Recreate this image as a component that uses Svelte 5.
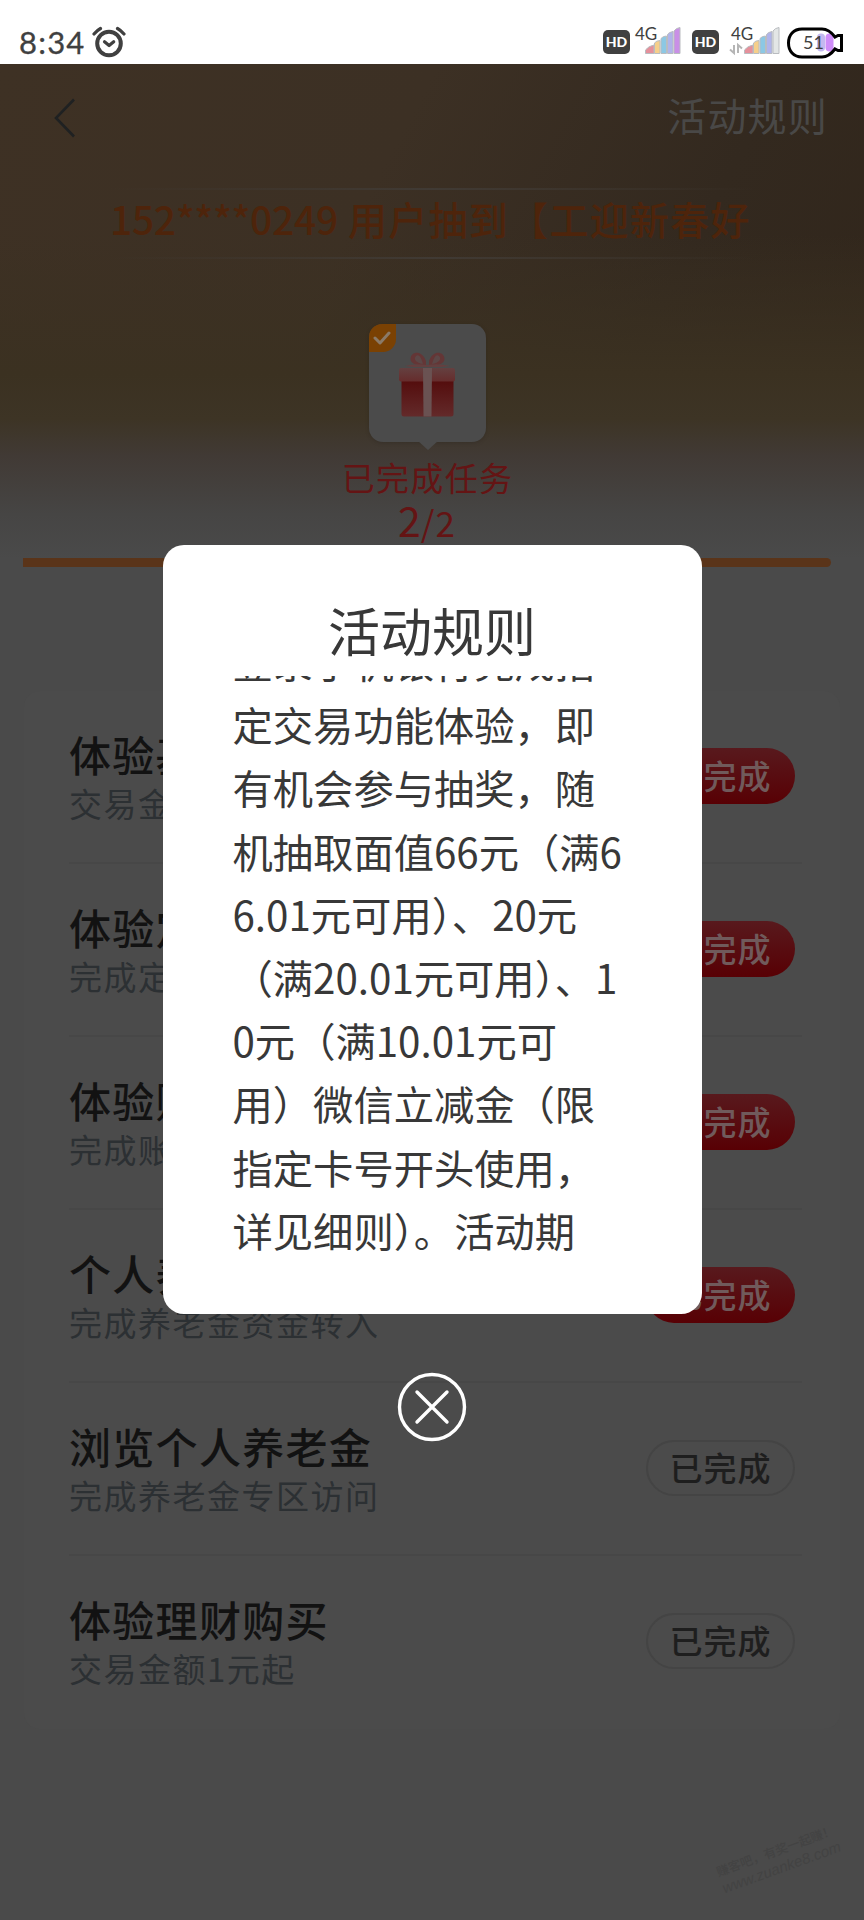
<!--
    Lottery task page with the rules dialog open on top of it.
    The page behind the dialog is drawn in its dimmed colours.
-->
<script>
    const tasks = [
        { title: '体验基', desc: '交易金', active: true },
        { title: '体验定', desc: '完成定', active: true },
        { title: '体验账', desc: '完成账', active: true },
        { title: '个人养', desc: '完成养老金资金转入', active: true },
        { title: '浏览个人养老金', desc: '完成养老金专区访问', active: false },
        { title: '体验理财购买', desc: '交易金额1元起', active: false },
    ];

    const rules = [
        '登录手机银行完成指',
        '定交易功能体验，即',
        '有机会参与抽奖，随',
        '机抽取面值66元（满6',
        '6.01元可用）、20元',
        '（满20.01元可用）、1',
        '0元（满10.01元可',
        '用）微信立减金（限',
        '指定卡号开头使用，',
        '详见细则）。活动期',
    ];

    const sims = [
        { data: false, last: '#c98fe6' },
        { data: true, last: '#e3e6e6' },
    ];
</script>

<div class="screen">
    <div class="status">
        <span class="time">8:34</span>
        <svg class="alarm" width="34" height="32" viewBox="0 0 34 32" fill="none" stroke="#404040" stroke-linecap="round">
            <circle cx="17" cy="17.5" r="11.8" stroke-width="4" />
            <path d="M12.5 15.8l4.6 3.8 4.6-3.8" stroke-width="3.2" stroke-linejoin="round" />
            <path d="M2 8q3-3.6 6.5-5.5M32 8q-3-3.6-6.5-5.5" stroke-width="3.2" />
        </svg>
        <div class="signals">
            {#each sims as sim}
                <span class="hd">HD</span>
                <div class="sim" class:data={sim.data}>
                    <svg width="52" height="30" viewBox="0 0 52 30">
                        {#if sim.data}
                            <path d="M5 19v8l-4-3.5M9 27v-8l4 3.5" fill="none" stroke="#b5b5b5" stroke-width="2" />
                        {/if}
                        <g stroke="#b9bcc0" stroke-width="1">
                            <path d="M15.5 27.5v-3.5q3-4 8.5-5v8.5z" fill="#e5909b" />
                            <path d="M24.5 27.5v-10.5q2-2.5 5.5-2.5v13z" fill="#f6cf8a" />
                            <path d="M31 27.5v-15q2-2.5 5.5-2.5v17.5z" fill="#8cc8e4" />
                            <path d="M37.5 27.5v-19q2-2.5 5.5-3v22z" fill="#b0b4ea" />
                            <path d="M44 27.5v-22.5q2-3 6-3.5v26z" fill={sim.last} />
                        </g>
                    </svg>
                    <span class="net">4G</span>
                </div>
            {/each}
            <div class="battery">
                <svg width="60" height="34" viewBox="0 0 60 34">
                    <rect x="32" y="7.5" width="8" height="18" rx="4" fill="#c3b9f0" />
                    <rect x="40.5" y="7.5" width="8" height="18" rx="4" fill="#cf8df8" />
                    <path d="M17 3h20c6 0 10 4 13 8l3-1.5V9.5h3.5v15H53L50 23c-3 4-7 8-13 8H17C8.5 31 3.5 25 3.5 17S8.5 3 17 3z" fill="none" stroke="#000" stroke-width="3" />
                </svg>
                <span>51</span>
            </div>
        </div>
    </div>

    <div class="page">
        <header>
            <svg width="24" height="40" viewBox="0 0 24 40" fill="none" stroke="#1f2122" stroke-width="2.6">
                <path d="M22 1.5L4 20l18 18.5" />
            </svg>
            <span>活动规则</span>
        </header>

        <div class="marquee"><span>152****0249</span> 用户抽到【工迎新春好</div>

        <div class="gift">
            <svg width="58" height="68" viewBox="0 0 58 68">
                <defs>
                    <linearGradient id="box" x2="0" y2="1">
                        <stop offset="0" stop-color="#540d0d" />
                        <stop offset="1" stop-color="#632a2a" />
                    </linearGradient>
                    <linearGradient id="lid" x2="0" y2="1">
                        <stop offset="0" stop-color="#644040" />
                        <stop offset="1" stop-color="#662c2c" />
                    </linearGradient>
                </defs>
                <path d="M3.5 31h52v33q0 2.5-2.5 2.5H6q-2.500 0-2.500-2.500z" fill="url(#box)" />
                <rect x="1" y="18" width="56" height="13.5" rx="2" fill="url(#lid)" />
                <path d="M25 18h9l-.5 48.5h-8z" fill="#6a5252" />
                <path d="M28 16C20 16 12 14 12.5 8.5C13.5 1 24 0 28 11zM31 16c8 0 16-2 15.5-7.5C45.5 1 35 0 31 11z" fill="#643636" />
                <path d="M25 14C18 13 15 9 18 6q4-3 7 8zM34 14c7-1 10-5 7-8q-4-3-7 8z" fill="#5c4747" />
                <path d="M7 16q10-3 22-1q12-2 23 1l-8 1H15z" fill="#644040" />
            </svg>
            <div class="done">
                <svg width="18" height="14" viewBox="0 0 18 14" fill="none" stroke="#8a7a68" stroke-width="3" stroke-linecap="round" stroke-linejoin="round">
                    <path d="M2 7l5 5L16 2" />
                </svg>
            </div>
        </div>
        <div class="gift-label">已完成任务</div>
        <div class="count">2<small>/2</small></div>
        <div class="progress"></div>

        <div class="tasks">
            {#each tasks as task}
                <div class="task">
                    <div>
                        <div class="title">{task.title}</div>
                        <div class="desc">{task.desc}</div>
                    </div>
                    <button type="button" class:active={task.active}>已完成</button>
                </div>
            {/each}
        </div>
    </div>

    <div class="watermark">
        <div>赚客吧，有奖一起赚！</div>
        <div class="site">www.zuanke8.com</div>
    </div>

    <div class="overlay">
        <div class="dialog">
            <h1>活动规则</h1>
            <div class="rules">
                {#each rules as line}
                    <p>{line}</p>
                {/each}
            </div>
        </div>
        <svg class="close" width="70" height="70" viewBox="0 0 70 70" fill="none" stroke="#fff" stroke-width="3.4" stroke-linecap="round">
            <circle cx="35" cy="35" r="32.5" />
            <path d="M20 20l30 30M50 20L20 50" />
        </svg>
    </div>
</div>

<style>
    :global(body) {
        margin: 0;
        background: #4a4a4a;
    }

    .screen {
        position: relative;
        width: 864px;
        height: 1920px;
        overflow: hidden;
        background: #4a4a4a;
        font-family: "Noto Sans CJK SC", sans-serif;
        white-space: nowrap;
    }

    .status {
        display: flex;
        align-items: flex-start;
        height: 64px;
        box-sizing: border-box;
        padding: 26px 19px 0 19px;
        background: #fff;
        color: #404040;
    }

    .time {
        width: 73px;
        font: 31px/32px Lato, sans-serif;
        letter-spacing: 1.2px;
        -webkit-text-stroke: 0.3px #404040;
    }

    .signals {
        display: flex;
        margin-left: auto;
    }

    .hd {
        width: 27px;
        height: 24px;
        margin-top: 4px;
        border-radius: 5px;
        background: #404040;
        color: #fff;
        font: 900 14px/24px Lato, sans-serif;
        text-align: center;
    }

    .sim {
        position: relative;
        width: 52px;
        margin-right: 10px;
    }

    .sim.data {
        margin-left: 10px;
    }

    .sim svg {
        display: block;
    }

    .net {
        position: absolute;
        left: 5px;
        top: -1px;
        font: 17px/18px Lato, sans-serif;
    }

    .sim.data .net {
        left: 2px;
    }

    .battery {
        position: relative;
        width: 60px;
        margin-left: -6px;
    }

    .battery span {
        position: absolute;
        left: 18px;
        top: 6px;
        font: 18px/20px Lato, sans-serif;
    }

    .page {
        display: flex;
        flex-direction: column;
        align-items: center;
        background:
            linear-gradient(to bottom, transparent 170px, #3b3121 310px, #3d3425 355px, #413a35 392px, #464544 450px, #4a4a4a 495px),
            linear-gradient(118deg, #3e3124 0%, #3c3024 25%, #33291f 45%, #31261b 60%);
    }

    header {
        display: flex;
        justify-content: space-between;
        align-items: center;
        align-self: stretch;
        height: 107px;
        padding: 0 36px 0 52px;
        color: #494847;
        font-size: 39px;
        letter-spacing: 1.2px;
    }

    header span {
        margin-top: -7px;
    }

    .marquee {
        width: 644px;
        height: 67px;
        margin-top: 17px;
        border: solid transparent;
        border-width: 2px 0;
        border-image: linear-gradient(to right, transparent, #403a34 50%, transparent) 2;
        color: #4e240b;
        font-size: 39px;
        line-height: 57px;
        font-weight: 500;
        letter-spacing: 1.3px;
    }

    .marquee span {
        letter-spacing: -0.3px;
    }

    .gift {
        position: relative;
        display: flex;
        justify-content: center;
        width: 117px;
        height: 118px;
        box-sizing: border-box;
        margin: 65px 10px 0 0;
        padding-top: 26px;
        border-radius: 14px;
        background: #4b4b4b;
        box-shadow: 0 1px 4px rgba(0, 0, 0, 0.15);
    }

    .gift::after {
        content: '';
        position: absolute;
        top: 117px;
        left: 49px;
        border: solid transparent;
        border-width: 9px 10px 0;
        border-top-color: #4b4b4b;
    }

    .done {
        position: absolute;
        top: 0;
        left: 0;
        display: grid;
        place-items: center;
        width: 27px;
        height: 28px;
        border-radius: 13px 0 13px 0;
        background: #7a4103;
    }

    .gift-label {
        margin: 12px 9px 0 0;
        color: #641414;
        font-size: 33px;
        line-height: 46px;
        letter-spacing: 1.3px;
    }

    .count {
        margin: -4px 10px 0 0;
        height: 46px;
        color: #641414;
        font-size: 41px;
        line-height: 46px;
    }

    .count small {
        font-size: 35px;
        letter-spacing: 1px;
    }

    .progress {
        width: 808px;
        height: 9px;
        margin: 16px 10px 0 0;
        border-radius: 0 5px 5px 0;
        background: #5a3419;
    }

    .tasks {
        width: 816px;
        margin-top: 124px;
        border-radius: 16px;
        background: #4b4b4b;
    }

    .task {
        display: flex;
        align-items: center;
        justify-content: space-between;
        height: 173px;
        box-sizing: border-box;
        margin: 0 38px 0 45px;
        padding-right: 7px;
        border-bottom: 2px solid #474747;
    }

    .task:last-child {
        border-color: transparent;
    }

    .title {
        margin-top: 4px;
        color: #121212;
        font-size: 42px;
        line-height: 50px;
        font-weight: 500;
        letter-spacing: 1.3px;
    }

    .desc {
        color: #2c3033;
        font-size: 33px;
        line-height: 49px;
        letter-spacing: 1.5px;
    }

    button {
        width: 149px;
        height: 56px;
        margin-top: -2px;
        padding: 0 0 2px;
        border: 2px solid #444;
        border-radius: 28px;
        background: none;
        color: #1e1e1e;
        font: 500 33px/50px "Noto Sans CJK SC", sans-serif;
        letter-spacing: 1px;
    }

    button.active {
        border: 0;
        background: linear-gradient(#58191d, #580004);
        color: #705a5b;
    }

    .watermark {
        position: absolute;
        left: 716px;
        top: 1841px;
        transform: rotate(-20deg);
        color: #434343;
        font-size: 12.5px;
        line-height: 18px;
        font-weight: 500;
    }

    .site {
        font: italic 15px/18px "Liberation Sans", sans-serif;
    }

    .overlay {
        position: absolute;
        inset: 0;
        display: flex;
        flex-direction: column;
        align-items: center;
        padding-top: 545px;
    }

    .dialog {
        width: 539px;
        height: 769px;
        box-sizing: border-box;
        padding: 55px 70px;
        border-radius: 21px;
        background: #fff;
        color: #383838;
    }

    h1 {
        margin: 0;
        font-size: 52px;
        line-height: 60px;
        font-weight: 400;
        text-align: center;
    }

    /* scrolled, so the first line is cut at the top edge */
    .rules {
        display: flex;
        flex-direction: column;
        justify-content: flex-end;
        height: 585px;
        margin-top: 16px;
        overflow: hidden;
    }

    .rules p {
        flex: none;
        margin: 0;
        font-size: 40.3px;
        line-height: 63.2px;
    }

    .close {
        margin-top: 58px;
    }
</style>
